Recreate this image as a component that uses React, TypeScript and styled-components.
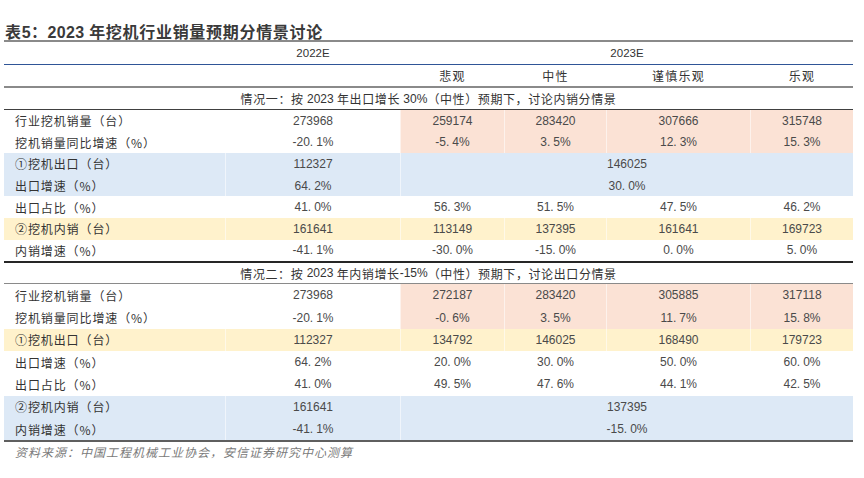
import React from 'react';
import styled, { createGlobalStyle } from 'styled-components';

//Styles:
const GlobalStyle = createGlobalStyle`
    * {
        box-sizing: border-box;
    }
    body {
        margin: 0;
        background: #ffffff;
        font-family: 'Noto Sans CJK SC', 'Liberation Sans', sans-serif;
    }
`;

const Page = styled.div`
    width: 864px;
    height: 478px;
    padding: 0 11px 0 4px;
    background: #ffffff;
`;

const Title = styled.h1`
    margin: 0;
    height: 40px;
    padding: 21px 0 0 1px;
    font-size: 16px;
    line-height: 20px;
    font-weight: 700;
    letter-spacing: 0.7px;
    color: #3a3a3a;
    font-family: 'Noto Sans CJK SC', sans-serif;

    span {
        font-family: 'Liberation Sans', sans-serif;
        letter-spacing: 0.3px;
    }
`;

const Rule = styled.div<{ size: number; color: string }>`
    height: ${(p) => p.size}px;
    background: ${(p) => p.color};
`;

const Row = styled.div<{ h: number; bg?: string }>`
    display: grid;
    grid-template-columns: 221px 175px 104px 102px 144px 103px;
    height: ${(p) => p.h}px;
    background: ${(p) => p.bg || 'transparent'};
`;

const Cell = styled.div<{ span?: number; bg?: string; first?: boolean }>`
    grid-column: span ${(p) => p.span || 1};
    display: flex;
    align-items: center;
    justify-content: center;
    background: ${(p) => p.bg || 'transparent'};
    border-left: ${(p) => (p.first ? 'none' : '1px solid rgba(255, 255, 255, 0.55)')};
    font-family: 'Liberation Sans', sans-serif;
    font-size: 12px;
    color: #4a4a4a;
    white-space: nowrap;
`;

const LabelCell = styled(Cell)`
    justify-content: flex-start;
    padding-left: 11px;
    font-family: 'Noto Sans CJK SC', sans-serif;
    letter-spacing: 0.9px;
    color: #333333;
`;

const Dot = styled.span`
    margin-right: 3px;
`;

const HeadText = styled.span`
    font-family: 'Liberation Sans', sans-serif;
    font-size: 11.5px;
    color: #333333;
`;

const CjkHead = styled.span`
    font-family: 'Noto Sans CJK SC', sans-serif;
    font-size: 12px;
    letter-spacing: 1.2px;
    color: #333333;
`;

const SectionHead = styled.div<{ h: number }>`
    height: ${(p) => p.h}px;
    display: flex;
    align-items: center;
    justify-content: center;
    font-family: 'Noto Sans CJK SC', sans-serif;
    font-size: 12px;
    letter-spacing: 0.6px;
    color: #333333;

    span {
        font-family: 'Liberation Sans', sans-serif;
        letter-spacing: 0;
    }
`;

const Source = styled.p`
    margin: 0;
    padding-left: 11px;
    height: 20px;
    line-height: 20px;
    font-family: 'Noto Sans CJK SC', sans-serif;
    font-size: 12px;
    font-style: italic;
    letter-spacing: 1px;
    color: #7a7a7a;
`;

//Data:
const PINK = '#fbe2d5';
const BLUE = '#dde9f6';
const YELLOW = '#fff2cc';

interface DataRow {
    label: string;
    base: string;
    values?: string[];
    merged?: string;
    rowBg?: string;
    valueBg?: string;
}

const sectionOne: DataRow[] = [
    { label: '行业挖机销量（台）', base: '273968', values: ['259174', '283420', '307666', '315748'], valueBg: PINK },
    { label: '挖机销量同比增速（%）', base: '-20.1%', values: ['-5.4%', '3.5%', '12.3%', '15.3%'], valueBg: PINK },
    { label: '①挖机出口（台）', base: '112327', merged: '146025', rowBg: BLUE },
    { label: '出口增速（%）', base: '64.2%', merged: '30.0%', rowBg: BLUE },
    { label: '出口占比（%）', base: '41.0%', values: ['56.3%', '51.5%', '47.5%', '46.2%'] },
    { label: '②挖机内销（台）', base: '161641', values: ['113149', '137395', '161641', '169723'], rowBg: YELLOW },
    { label: '内销增速（%）', base: '-41.1%', values: ['-30.0%', '-15.0%', '0.0%', '5.0%'] },
];

const sectionTwo: DataRow[] = [
    { label: '行业挖机销量（台）', base: '273968', values: ['272187', '283420', '305885', '317118'], valueBg: PINK },
    { label: '挖机销量同比增速（%）', base: '-20.1%', values: ['-0.6%', '3.5%', '11.7%', '15.8%'], valueBg: PINK },
    { label: '①挖机出口（台）', base: '112327', values: ['134792', '146025', '168490', '179723'], rowBg: YELLOW },
    { label: '出口增速（%）', base: '64.2%', values: ['20.0%', '30.0%', '50.0%', '60.0%'] },
    { label: '出口占比（%）', base: '41.0%', values: ['49.5%', '47.6%', '44.1%', '42.5%'] },
    { label: '②挖机内销（台）', base: '161641', merged: '137395', rowBg: BLUE },
    { label: '内销增速（%）', base: '-41.1%', merged: '-15.0%', rowBg: BLUE },
];

// percentages are set with a wide decimal point, like the source table
const Num = ({ value }: { value: string }): JSX.Element => {
    const dot = value.indexOf('.');
    if (dot < 0) return <>{value}</>;
    return (
        <>
            {value.slice(0, dot)}
            <Dot>.</Dot>
            {value.slice(dot + 1)}
        </>
    );
};

const DataRows = ({ rows, h }: { rows: DataRow[]; h: number }): JSX.Element => (
    <>
        {rows.map((r, i) => (
            <Row key={i} h={h} bg={r.rowBg}>
                <LabelCell first>{r.label}</LabelCell>
                <Cell>
                    <Num value={r.base} />
                </Cell>
                {r.merged ? (
                    <Cell span={4}>
                        <Num value={r.merged} />
                    </Cell>
                ) : (
                    r.values?.map((v, j) => (
                        <Cell key={j} bg={r.valueBg}>
                            <Num value={v} />
                        </Cell>
                    ))
                )}
            </Row>
        ))}
    </>
);

const App = (): JSX.Element => {
    return (
        <Page>
            <GlobalStyle />
            <Title>
                表<span>5</span>：<span>2023 </span>年挖机行业销量预期分情景讨论
            </Title>
            <Rule size={2} color="#8a8a8a" />
            <Row h={22}>
                <Cell first />
                <Cell>
                    <HeadText>2022E</HeadText>
                </Cell>
                <Cell span={4}>
                    <HeadText>2023E</HeadText>
                </Cell>
            </Row>
            <Rule size={1} color="#2f5597" />
            <Row h={21}>
                <Cell first />
                <Cell />
                <Cell>
                    <CjkHead>悲观</CjkHead>
                </Cell>
                <Cell>
                    <CjkHead>中性</CjkHead>
                </Cell>
                <Cell>
                    <CjkHead>谨慎乐观</CjkHead>
                </Cell>
                <Cell>
                    <CjkHead>乐观</CjkHead>
                </Cell>
            </Row>
            <Rule size={2} color="#8a8a8a" />
            <SectionHead h={21}>
                情况一：按<span>&nbsp;2023&nbsp;</span>年出口增长<span>&nbsp;30%</span>（中性）预期下，讨论内销分情景
            </SectionHead>
            <Rule size={1} color="#404040" />
            <DataRows rows={sectionOne} h={21.6} />
            <Rule size={2} color="#262626" />
            <SectionHead h={20}>
                情况二：按<span>&nbsp;2023&nbsp;</span>年内销增长<span>-15%</span>（中性）预期下，讨论出口分情景
            </SectionHead>
            <Rule size={1} color="#8a8a8a" />
            <DataRows rows={sectionTwo} h={22.3} />
            <Rule size={2} color="#5f5f5f" />
            <Source>资料来源：中国工程机械工业协会，安信证券研究中心测算</Source>
        </Page>
    );
};

export default App;
